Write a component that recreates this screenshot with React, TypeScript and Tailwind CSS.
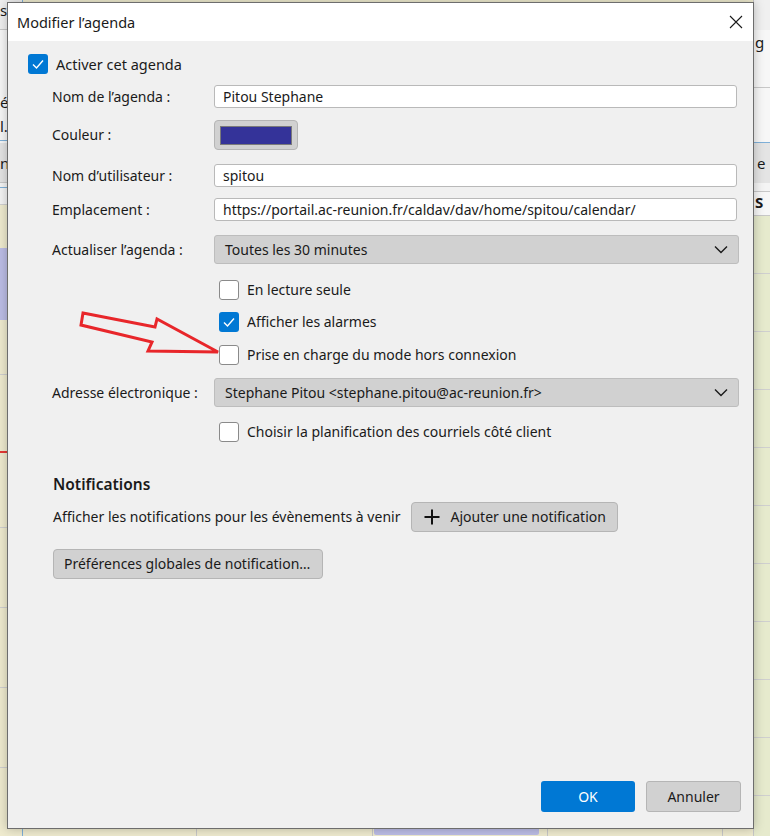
import React from "react";

const font = { fontFamily: '"Segoe UI", "Noto Sans", Arial, sans-serif' };

function Check({ checked }: { checked?: boolean }) {
  return checked ? (
    <span className="flex h-[20px] w-[20px] shrink-0 items-center justify-center rounded-[3px] bg-[#0078d4]">
      <svg width="14" height="14" viewBox="0 0 14 14" fill="none">
        <path d="M2 7.5 L5.5 11 L12 3.5" stroke="white" strokeWidth="1.4" />
      </svg>
    </span>
  ) : (
    <span className="block h-[20px] w-[20px] shrink-0 rounded-[3px] border border-[#8a8a8a] bg-white" />
  );
}

function Chevron() {
  return (
    <svg width="14" height="9" viewBox="0 0 14 9" fill="none">
      <path d="M1 1.5 L7 7.5 L13 1.5" stroke="#1a1a1a" strokeWidth="1.4" />
    </svg>
  );
}

function Row({ label, children, h }: { label: string; children: React.ReactNode; h: string }) {
  return (
    <div className={`flex items-center ${h}`}>
      <div className="w-[162px] shrink-0">{label}</div>
      <div className="flex-1">{children}</div>
    </div>
  );
}

function TextInput({ value }: { value: string }) {
  return (
    <div className="flex h-[23px] w-[523px] items-center rounded-[3px] border border-[#b9b9b9] bg-white pl-[8px]">
      {value}
    </div>
  );
}

function Select({ value }: { value: string }) {
  return (
    <div className="flex h-[29px] w-[525px] items-center justify-between rounded-[3px] border border-[#bdbdbd] bg-[#d1d1d1] pl-[10px] pr-[10px]">
      <span>{value}</span>
      <Chevron />
    </div>
  );
}

function CheckLine({ label, checked }: { label: string; checked?: boolean }) {
  return (
    <div className="flex h-[20px] items-center gap-[8px]">
      <Check checked={checked} />
      <span>{label}</span>
    </div>
  );
}

export default function App() {
  return (
    <div
      className="relative h-[836px] w-[770px] overflow-hidden bg-[#efebcf] text-[14px] leading-[20px] text-[#1a1a1a]"
      style={font}
    >
      {/* background calendar app (mostly hidden) */}
      <div className="flex h-full w-full">
        <div className="flex w-[23px] flex-col border-r border-[#7fb0d8] text-[15px]">
          <div className="h-[30px] border-b border-[#c8c8c8] bg-[#f0f0f0] leading-[20px]">s</div>
          <div className="flex h-[110px] flex-col justify-end bg-[#f7f7f7] pb-[2px]">
            <span className="leading-[24px]">é</span>
            <span className="leading-[24px]">l.</span>
          </div>
          <div className="h-[3px] border-t border-[#7fb0d8] bg-[#f7f7f7]" />
          <div className="flex h-[40px] items-center border-b border-[#c8c8c8] bg-[#e4e4e4]">n</div>
          <div className="h-[5px] border-b border-[#7fb0d8] bg-[#f4f4f4]" />
          <div className="h-[16px] bg-[#f4f4f4]" />
          <div className="h-[44px] border-t border-[#d0d0d0] bg-[#efebcf]" />
          <div className="h-[72px] bg-[#bcbde6]" />
          <div className="h-[55px] border-b border-[#cfcfcf]" />
          <div className="h-[78px] border-b-2 border-[#e53935]" />
          <div className="h-[75px] border-b border-[#cfcfcf]" />
          <div className="h-[80px] border-b border-[#cfcfcf]" />
          <div className="h-[80px] border-b border-[#cfcfcf]" />
          <div className="h-[80px] border-b border-[#cfcfcf]" />
          <div className="flex-1" />
        </div>
        <div className="flex flex-1 flex-col">
          <div className="flex-1" />
          <div className="flex h-[8px] border-t border-[#c8c8c8]">
            <div className="w-[174px] shrink-0 border-r border-[#c8c8c8]" />
            <div className="w-[176px] shrink-0 border-r border-[#c8c8c8]" />
            <div className="flex w-[175px] shrink-0 border-r border-[#c8c8c8] pl-[1px]">
              <div className="h-[6px] w-[165px] rounded-b-[2px] bg-[#bcbde6]" />
            </div>
            <div className="w-[175px] shrink-0 border-r border-[#c8c8c8]" />
            <div className="flex-1" />
          </div>
        </div>
        <div className="flex w-[17px] flex-col border-l border-[#c8c8c8] text-[15px]">
          <div className="h-[30px] bg-[#f0f0f0]" />
          <div className="h-[58px] border-b border-[#c8c8c8] bg-[#f7f7f7] pl-[1px] leading-[24px]">g</div>
          <div className="h-[55px] border-b border-[#7fb0d8] bg-[#f7f7f7]" />
          <div className="flex h-[40px] items-center bg-[#e4e4e4] pl-[3px]">e</div>
          <div className="h-[9px] border-b border-[#c8c8c8] bg-[#f4f4f4]" />
          <div className="h-[24px] border-b border-[#c8c8c8] bg-[#f7f7f7] pl-[1px] font-bold">S</div>
          <div className="flex flex-1 flex-col bg-[#e6eacd]">
            <div className="h-[58px] shrink-0 border-b border-[#cfcfcf]" />
            <div className="h-[58px] shrink-0 border-b border-[#cfcfcf]" />
            <div className="h-[58px] shrink-0 border-b border-[#cfcfcf]" />
            <div className="h-[58px] shrink-0 border-b border-[#cfcfcf]" />
            <div className="h-[58px] shrink-0 border-b border-[#cfcfcf]" />
            <div className="h-[58px] shrink-0 border-b border-[#cfcfcf]" />
            <div className="h-[58px] shrink-0 border-b border-[#cfcfcf]" />
            <div className="h-[58px] shrink-0 border-b border-[#cfcfcf]" />
            <div className="h-[58px] shrink-0 border-b border-[#cfcfcf]" />
            <div className="h-[58px] shrink-0 border-b border-[#cfcfcf]" />
          </div>
        </div>
      </div>

      {/* dialog */}
      <div className="absolute left-[7px] top-[2px] flex h-[827px] w-[747px] flex-col border border-[#6d6d6d] bg-[#f0f0f0] shadow-[0_0_10px_rgba(0,0,0,0.25)]">
        <div className="flex h-[38px] shrink-0 items-center justify-between bg-white pl-[9px] pr-[9px] text-[14.5px]">
          <span>Modifier l’agenda</span>
          <svg width="14" height="14" viewBox="0 0 14 14" fill="none" className="mr-[1px]">
            <path d="M1 1 L13 13 M13 1 L1 13" stroke="#1a1a1a" strokeWidth="1.1" />
          </svg>
        </div>
        <div className="flex flex-1 flex-col pl-[20px] pt-[13px]">
          <div className="flex h-[20px] items-center gap-[8px] text-[14.5px]">
            <Check checked />
            <span>Activer cet agenda</span>
          </div>
          <div className="flex flex-col pl-[24px] pt-[11px]">
            <Row label="Nom de l’agenda :" h="h-[23px]">
              <TextInput value="Pitou Stephane" />
            </Row>
            <div className="mt-[12px]">
              <Row label="Couleur :" h="h-[30px]">
                <div className="flex h-[30px] w-[84px] items-center justify-center rounded-[4px] border border-[#b5b5b5] bg-[#d1d1d1]">
                  <div className="h-[19px] w-[72px] border border-[#7a7a7a] bg-[#343399]" />
                </div>
              </Row>
            </div>
            <div className="mt-[14px]">
              <Row label="Nom d’utilisateur :" h="h-[23px]">
                <TextInput value="spitou" />
              </Row>
            </div>
            <div className="mt-[11px]">
              <Row label="Emplacement :" h="h-[23px]">
                <TextInput value="https://portail.ac-reunion.fr/caldav/dav/home/spitou/calendar/" />
              </Row>
            </div>
            <div className="mt-[14px]">
              <Row label="Actualiser l’agenda :" h="h-[29px]">
                <Select value="Toutes les 30 minutes" />
              </Row>
            </div>
            <div className="flex flex-col pl-[167px] pt-[16px]">
              <CheckLine label="En lecture seule" />
              <div className="mt-[12px]">
                <CheckLine label="Afficher les alarmes" checked />
              </div>
              <div className="mt-[13px]">
                <CheckLine label="Prise en charge du mode hors connexion" />
              </div>
            </div>
            <div className="mt-[13px]">
              <Row label="Adresse électronique :" h="h-[29px]">
                <Select value="Stephane Pitou <stephane.pitou@ac-reunion.fr>" />
              </Row>
            </div>
            <div className="pl-[167px] pt-[15px]">
              <CheckLine label="Choisir la planification des courriels côté client" />
            </div>
          </div>
          <div className="pl-[25px] pt-[32px] text-[15.5px] font-semibold">Notifications</div>
          <div className="flex items-center gap-[11px] pl-[25px] pt-[8px]">
            <span>Afficher les notifications pour les évènements à venir</span>
            <div className="flex h-[30px] items-center gap-[9px] rounded-[4px] border border-[#b5b5b5] bg-[#d1d1d1] pl-[11px] pr-[11px]">
              <svg width="18" height="18" viewBox="0 0 18 18" fill="none">
                <path d="M9 1.5 V16.5 M1.5 9 H16.5" stroke="#111" strokeWidth="2" />
              </svg>
              <span>Ajouter une notification</span>
            </div>
          </div>
          <div className="pl-[25px] pt-[17px]">
            <div className="inline-flex h-[30px] items-center rounded-[4px] border border-[#b5b5b5] bg-[#d1d1d1] pl-[10px] pr-[12px]">
              Préférences globales de notification…
            </div>
          </div>
          <div className="flex-1" />
          <div className="flex justify-end gap-[11px] pb-[16px] pr-[12px]">
            <div className="flex h-[31px] w-[94px] items-center justify-center rounded-[3px] bg-[#0078d4] text-white">OK</div>
            <div className="flex h-[31px] w-[95px] items-center justify-center rounded-[3px] border border-[#b5b5b5] bg-[#d1d1d1]">Annuler</div>
          </div>
        </div>
      </div>

      {/* red arrow annotation */}
      <svg className="absolute left-0 top-0" width="770" height="836" viewBox="0 0 770 836" fill="none">
        <polygon
          points="83,313 155,327 157,319 218,352 148,351 152,342 81,325"
          stroke="#e8262a"
          strokeWidth="3"
          strokeLinejoin="miter"
          fill="none"
        />
      </svg>
    </div>
  );
}
